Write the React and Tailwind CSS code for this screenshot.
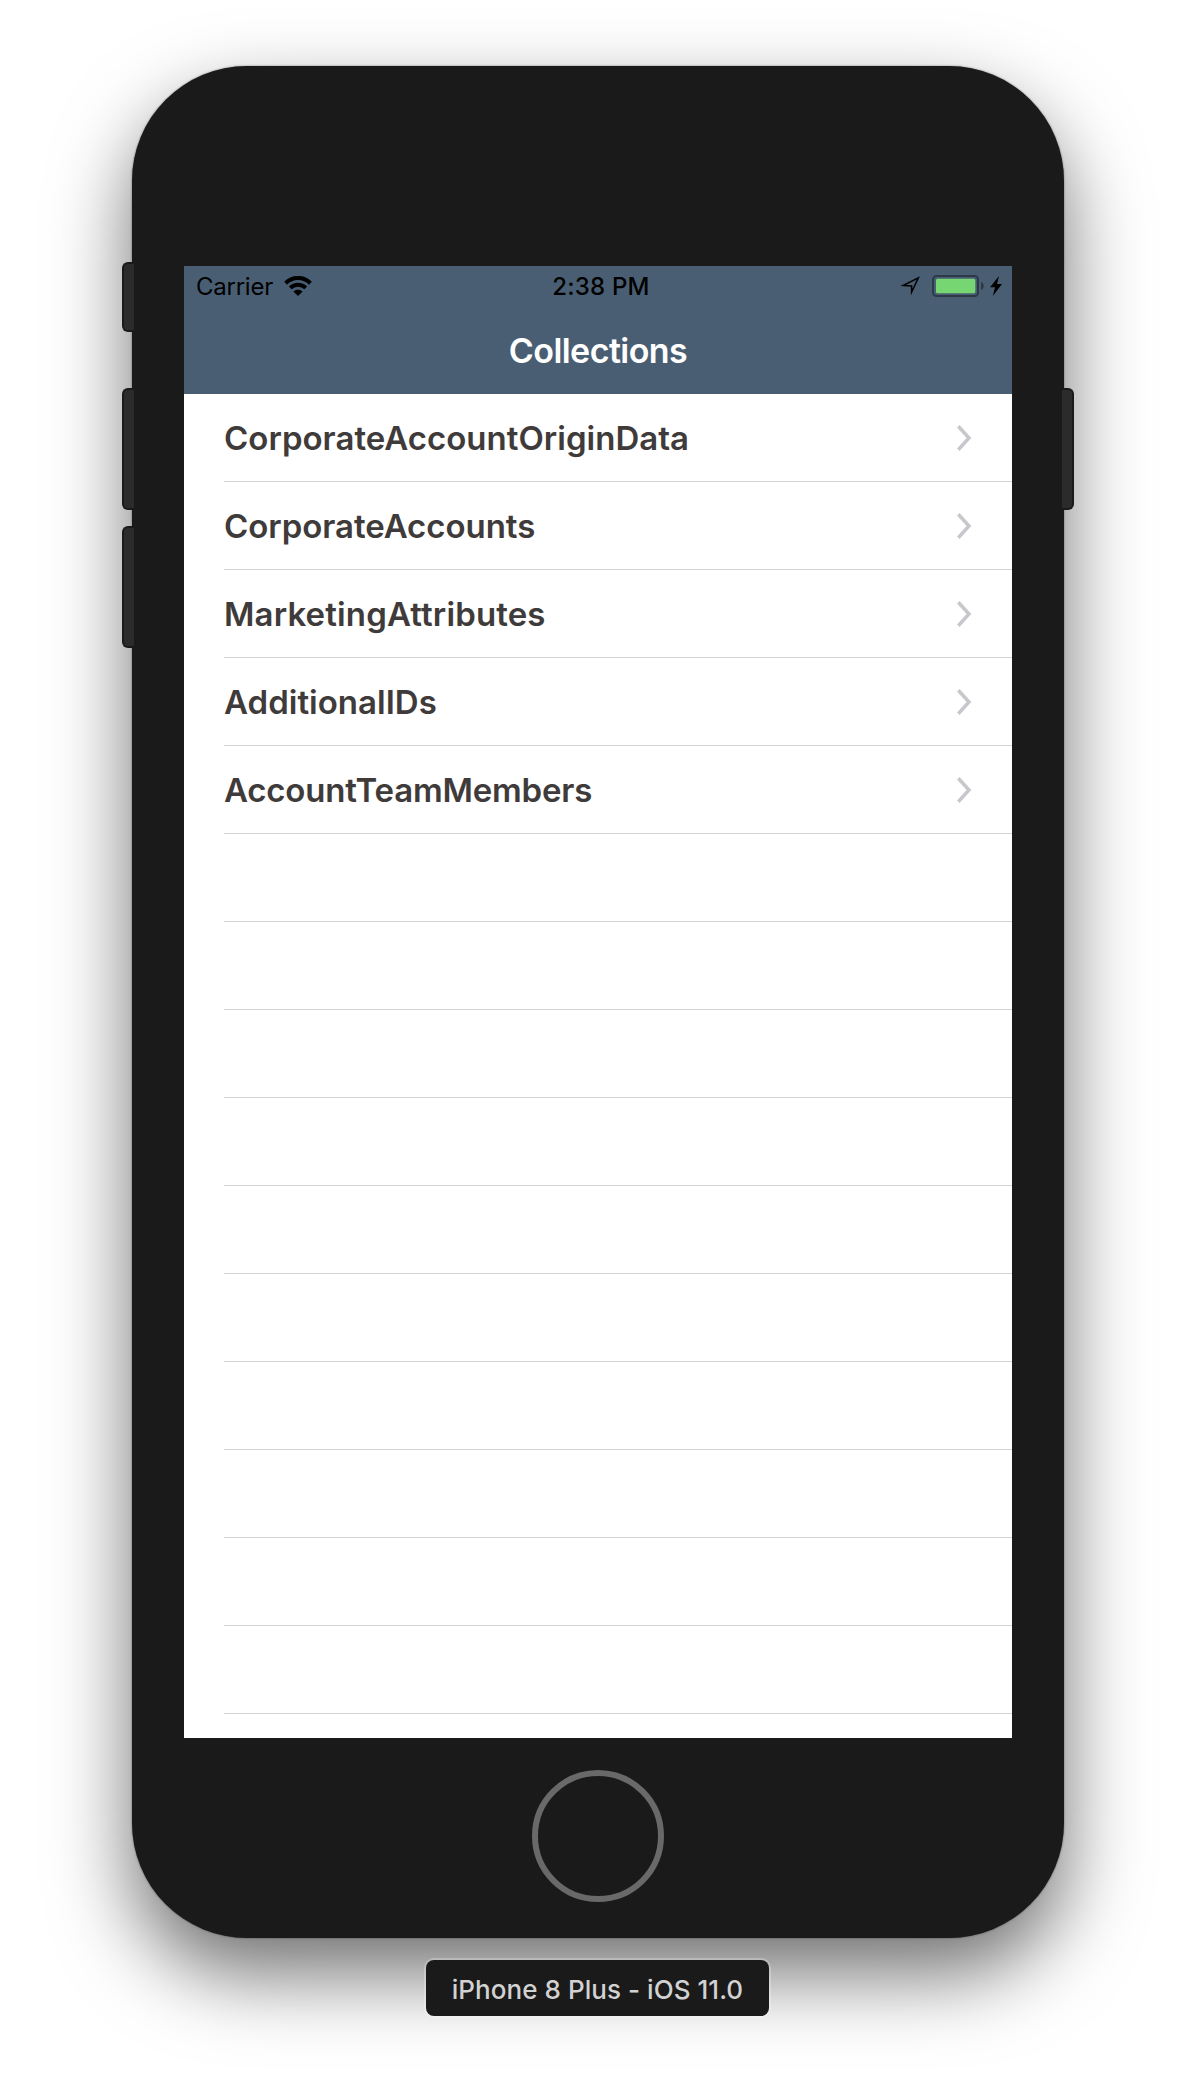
const rows = [
  { name: 'CorporateAccountOriginData', spacing: 'tracking-[0.02px]' },
  { name: 'CorporateAccounts', spacing: 'tracking-[-0.04px]' },
  { name: 'MarketingAttributes', spacing: 'tracking-[0.14px]' },
  { name: 'AdditionalIDs', spacing: 'tracking-[0.02px]' },
  { name: 'AccountTeamMembers', spacing: 'tracking-[-0.2px]' },
];
const emptyRows = Array.from({ length: 10 });

function WifiIcon() {
  return (
    <svg className="ml-[11px] h-5 w-7" viewBox="0 0 28 20">
      <path d="M1.6 7.2C8.6 0.2 19.4 0.2 26.4 7.2" fill="none" stroke="#000" strokeWidth="4.1" />
      <path d="M6.3 11.9C10.6 7.7 17.4 7.7 21.7 11.9" fill="none" stroke="#000" strokeWidth="4" />
      <path d="M9.4 15.4C12 13.1 16 13.1 18.6 15.4L14 20Z" fill="#000" />
    </svg>
  );
}

function LocationIcon() {
  return (
    <svg className="h-5 w-5" viewBox="0 0 20 20">
      <path d="M18.3 1.9L11.6 16.2V9.9L3.2 9.5Z" fill="none" stroke="#000" strokeWidth="1.5" strokeMiterlimit="8" />
    </svg>
  );
}

function BatteryIcon() {
  return (
    <svg className="ml-3 h-[22px] w-[52px]" viewBox="0 0 52 22">
      <rect x="1" y="1" width="45" height="20" rx="3.5" fill="none" stroke="#2c3947" strokeWidth="2" />
      <rect x="4" y="3.7" width="39.3" height="14.6" rx="1.5" fill="#76d672" />
      <path d="M49 7C52.6 8 52.6 14 49 15Z" fill="#2c3947" />
    </svg>
  );
}

function BoltIcon() {
  return (
    <svg className="ml-[6px] h-5 w-3" viewBox="0 0 12 20">
      <path d="M9 0L0 11.2H5L2.8 20L12 8H7Z" fill="#000" />
    </svg>
  );
}

function Chevron() {
  return (
    <svg className="h-[26px] w-[15px]" viewBox="0 0 15 26">
      <path d="M1.3 1.2L12 13L1.3 24.8" fill="none" stroke="#c7c7cc" strokeWidth="3.5" />
    </svg>
  );
}

export default function App() {
  return (
    <div className="flex h-[2100px] w-[1196px] flex-col items-center overflow-hidden bg-white pt-[66px] font-['Inter',sans-serif]">
      <div className="relative flex h-[1872px] w-[932px] shrink-0 flex-col items-center rounded-[115px] bg-[#1a1a1a] pt-[200px] shadow-[0_0_2px_rgba(0,0,0,0.5),0_36px_80px_rgba(0,0,0,0.56)]">
        <div className="absolute top-[196px] -left-[10px] h-[70px] w-3 rounded-l-[6px] border-2 border-r-0 border-[#1a1a1a] bg-[#2b2b2b]" />
        <div className="absolute top-[322px] -left-[10px] h-[122px] w-3 rounded-l-[6px] border-2 border-r-0 border-[#1a1a1a] bg-[#2b2b2b]" />
        <div className="absolute top-[460px] -left-[10px] h-[122px] w-3 rounded-l-[6px] border-2 border-r-0 border-[#1a1a1a] bg-[#2b2b2b]" />
        <div className="absolute top-[322px] -right-[10px] h-[122px] w-3 rounded-r-[6px] border-2 border-l-0 border-[#1a1a1a] bg-[#2b2b2b]" />

        <div className="flex h-[1472px] w-[828px] shrink-0 flex-col overflow-hidden bg-white">
          <header className="h-32 shrink-0 bg-[#4a5e73] text-black">
            <div className="grid h-10 grid-cols-[1fr_auto_1fr] grid-rows-[40px] items-center pr-[10px] pl-3 text-[24px] leading-[38px]">
              <div className="flex h-10 items-center">
                <span className="pt-0.5 tracking-[-0.25px]">Carrier</span>
                <WifiIcon />
              </div>
              <span className="pt-0.5 pl-1 font-medium tracking-[0.2px]">2:38 PM</span>
              <div className="flex h-10 items-center justify-end">
                <LocationIcon />
                <BatteryIcon />
                <BoltIcon />
              </div>
            </div>
            <h1 className="h-[88px] pt-px text-center text-[34px] leading-[88px] font-semibold tracking-[-0.55px] text-white">Collections</h1>
          </header>
          <ul className="pl-10">
            {rows.map((row) => (
              <li key={row.name} className="flex h-[88px] items-center justify-between border-b border-[#d3d3d4] pr-10">
                <span className={`pt-0.5 text-[33px] font-semibold text-[#3f3b3a] ${row.spacing}`}>{row.name}</span>
                <Chevron />
              </li>
            ))}
            {emptyRows.map((_, i) => (
              <li key={i} className="h-[88px] border-b border-[#d3d3d4]" />
            ))}
          </ul>
        </div>

        <div className="mt-8 h-[132px] w-[132px] shrink-0 rounded-full border-[6px] border-[#696969]" />
      </div>

      <div className="relative mt-[22px] mr-px h-14 w-[343px] shrink-0 rounded-lg bg-[#1a1a1a] text-center text-[26px] leading-[60px] font-medium tracking-[0.05px] text-[#d2d2d2] shadow-[0_0_0_2px_rgba(255,255,255,0.25)]">
        iPhone 8 Plus - iOS 11.0
      </div>
    </div>
  );
}
